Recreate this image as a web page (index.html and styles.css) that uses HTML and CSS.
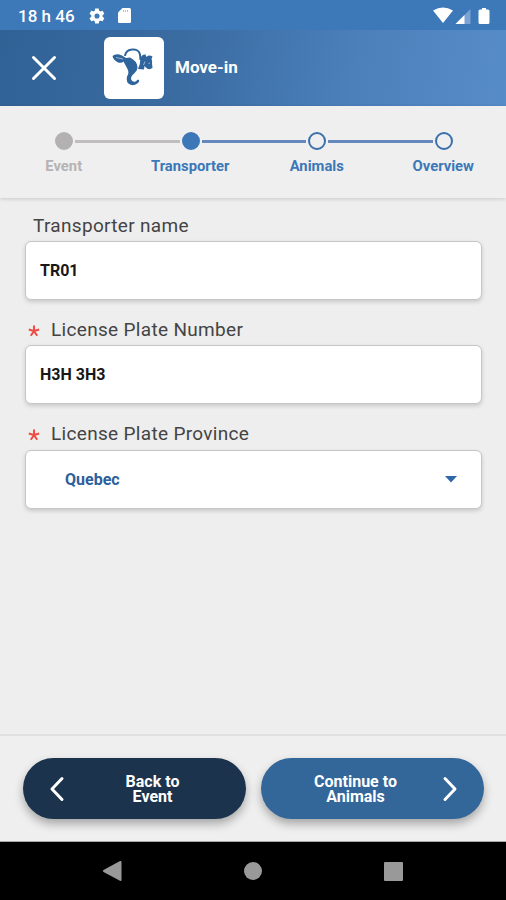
FILE: index.html
```html
<!DOCTYPE html>
<html lang="en">
<head>
<meta charset="utf-8">
<title>Move-in</title>
<link rel="stylesheet" href="styles.css">
</head>
<body>
<div class="status">
  <span class="clock">18 h 46</span>
  <svg class="gear" width="18" height="18" viewBox="0 0 24 24"><path fill="#fff" fill-rule="evenodd" d="M19.4 13c.1-.3.1-.7.1-1s0-.7-.1-1l2.1-1.600c.2-.2.200-.4.1-.6l-2-3.500c-.1-.2-.4-.3-.6-.2l-2.500 1c-.5-.4-1.100-.7-1.700-1l-.4-2.600c0-.3-.2-.5-.5-.5h-4c-.3 0-.5.2-.5.500l-.4 2.600c-.6.3-1.200.6-1.700 1l-2.500-1c-.2-.1-.5 0-.6.2l-2 3.500c-.1.200-.1.400.1.600L4.500 11c0 .3-.1.700-.1 1s0 .7.1 1l-2.200 1.600c-.2.2-.2.400-.1.600l2 3.500c.1.200.4.300.6.200l2.500-1c.5.4 1.100.7 1.700 1l.4 2.600c0 .3.2.500.5.500h4c.3 0 .5-.2.500-.5l.4-2.600c.6-.3 1.200-.6 1.700-1l2.500 1c.2.100.5 0 .6-.2l2-3.500c.1-.2.100-.4-.1-.6zM12 15.400a3.400 3.400 0 1 1 0-6.800 3.400 3.400 0 0 1 0 6.800z"/></svg>
  <svg class="card" width="13" height="15" viewBox="0 0 13 15"><path fill="#fff" d="M4.500 0H11.500Q13 0 13 1.500V13.500Q13 15 11.500 15H1.500Q0 15 0 13.500V4.500Z"/><path stroke="#a9c3e2" stroke-width="1" d="M5.500 2v2M7.500 2v2M9.500 2v2"/></svg>
  <svg class="signals" width="58" height="18" viewBox="0 0 58 18"><path fill="#fff" d="M0 3.500Q10 -2.500 20 3.500L10 16Z"/><path fill="#7ba3d4" d="M37.500 2V17H22.500Z"/><path fill="#fff" d="M31.500 8V17H22.500Z"/><path fill="#fff" d="M49 1h4v1.500h2q1.500 0 1.500 1.500V15.500q0 1.500-1.500 1.500h-8q-1.500 0-1.500-1.500V4q0-1.500 1.500-1.500h2Z"/></svg>
</div>
<header class="appbar">
  <svg class="close" width="26" height="26" viewBox="0 0 26 26"><path stroke="#fff" stroke-width="3" stroke-linecap="round" d="M2.500 2.500L23.500 23.500M23.500 2.500L2.500 23.500"/></svg>
  <div class="logo">
    <svg width="60" height="62" viewBox="0 0 60 62"><path class="ring" d="M21 19C22 10.500 35 10.500 36 17.500L36.500 23"/><path d="M8.500 19Q12 16 18 18.500L22 21L26 20.500Q33 24 33.500 30C33.500 36 27 37 27 42Q28 45.500 31.500 44.500L34 42.500Q36.500 43.500 34 46Q31 49 26.500 47.800Q21.500 45.500 23 39.500Q25.500 36 23.500 32L19.500 24.500Q18 26.500 14 25.500Q9 22.500 8.500 19Z"/><path d="M36.500 21Q38 17 41.500 17.500L42.500 20Q45 17.500 48.500 19.500L47.500 22Q48.500 24 48 26L48.500 31Q45.500 33 43 31.500L40.500 29L40 32.500L34 32Q36.500 27 36.500 21Z"/><path class="cut" d="M12 20.500L19 22M41 24.500L39.500 28M44.500 26.500L46 26"/></svg>
  </div>
  <h1 class="title">Move-in</h1>
</header>
<nav class="stepper">
  <div class="step done"><div class="track"><i class="line none"></i><i class="dot full"></i><i class="line"></i></div><span>Event</span></div>
  <div class="step"><div class="track"><i class="line gray"></i><i class="dot full"></i><i class="line"></i></div><span>Transporter</span></div>
  <div class="step"><div class="track"><i class="line"></i><i class="dot"></i><i class="line"></i></div><span>Animals</span></div>
  <div class="step"><div class="track"><i class="line"></i><i class="dot"></i><i class="line none"></i></div><span>Overview</span></div>
</nav>
<main class="form">
  <div class="label first">Transporter name</div>
  <div class="field">TR01</div>
  <div class="label"><svg class="star" width="12" height="12" viewBox="0 0 12 12"><path d="M6 6V.5M6 6L.8 4.500M6 6L11.200 4.500M6 6L2.800 10.800M6 6L9.200 10.800"/></svg>License Plate Number</div>
  <div class="field">H3H 3H3</div>
  <div class="label"><svg class="star" width="12" height="12" viewBox="0 0 12 12"><path d="M6 6V.5M6 6L.8 4.500M6 6L11.200 4.500M6 6L2.800 10.800M6 6L9.200 10.800"/></svg>License Plate Province</div>
  <div class="field select">Quebec<svg width="12" height="7" viewBox="0 0 12 7"><path fill="#2f68a8" d="M0 0H12L6 6.500Z"/></svg></div>
</main>
<footer class="actions">
  <button class="btn back"><svg width="16" height="26" viewBox="0 0 16 26"><path d="M13 2.500L3 13L13 23.500"/></svg><span>Back to<br>Event</span></button>
  <button class="btn next"><span>Continue to<br>Animals</span><svg width="16" height="26" viewBox="0 0 16 26"><path d="M3 2.500L13 13L3 23.500"/></svg></button>
</footer>
<div class="sysnav">
  <svg width="20" height="22" viewBox="0 0 20 22"><path fill="#999" d="M18 1Q19.500 .5 19.500 2V20Q19.500 21.500 18 20.800L1.500 12Q0 11 1.500 10Z"/></svg>
  <i class="home"></i>
  <i class="recent"></i>
</div>
</body>
</html>
```
FILE: styles.css
```css
* { box-sizing: border-box; }
body {
  margin: 0;
  height: 900px;
  display: flex;
  flex-direction: column;
  overflow: hidden;
  background: #eee;
  font-family: Roboto, "Liberation Sans", sans-serif;
}
svg { display: block; flex: none; fill: none; }
.status {
  height: 30px;
  display: flex;
  align-items: center;
  padding: 1px 15px 0 18px;
  background: #3d78b8;
  color: #fff;
}
.clock { font-size: 17px; font-weight: 500; width: 70px; white-space: nowrap; }
.card { margin-left: 12px; }
.signals { margin-left: auto; }
.appbar {
  height: 76px;
  display: flex;
  align-items: center;
  padding-left: 31px;
  background: linear-gradient(100deg, #316296 0%, #3a6ba1 35%, #4b80bb 70%, #568cc8 100%);
  color: #fff;
}
.logo {
  width: 60px;
  height: 62px;
  margin-left: 47px;
  border-radius: 6px;
  background: #fff;
}
.logo svg { fill: #2f659c; }
.logo .ring { fill: none; stroke: #2f659c; stroke-width: 2; }
.logo .cut { fill: none; stroke: #fff; stroke-width: 1; opacity: .5; }
.title { margin: 0 0 3px 11px; font-size: 17px; font-weight: 700; }
.stepper {
  height: 92px;
  display: flex;
  padding-top: 26px;
  background: #efefef;
  box-shadow: 0 1px 4px rgba(0, 0, 0, .16);
}
.step {
  flex: 1;
  text-align: center;
  font-size: 14.8px;
  font-weight: 700;
  line-height: 18px;
  color: #3c77b8;
}
.step.done { color: #b5b3b4; }
.step span { display: block; margin-top: 7px; padding-left: 1px; }
.track { display: flex; align-items: center; gap: 2px; height: 18px; padding-left: 1px; margin-right: -1px; }
.line { flex: 1; height: 3px; background: #6488bb; }
.gray, .done .line { background: #bfbdbe; }
.none, .done .none { background: none; }
.dot { width: 18px; height: 18px; border: 2.5px solid #3b70ad; border-radius: 50%; }
.full { background: #3c77b8; border-color: #3c77b8; }
.done .full { background: #b4b1b2; border-color: #b4b1b2; }
.form { flex: 1; padding: 15px 24px 0 25px; }
.label {
  display: flex;
  align-items: center;
  height: 28px;
  margin-top: 17px;
  padding: 0 0 4px 3px;
  font-size: 19px;
  letter-spacing: .32px;
  color: #444;
}
.label.first { margin-top: 0; padding-left: 8px; }
.star { margin: 3px 11px 0 0; stroke: #ef4b43; stroke-width: 2; }
.field {
  height: 59px;
  display: flex;
  align-items: center;
  padding: 0 24px 0 14px;
  border: 1px solid #c6c6c6;
  border-radius: 6px;
  background: #fff;
  box-shadow: 0 2px 4px rgba(0, 0, 0, .16);
  font-size: 16px;
  font-weight: 700;
  color: #181818;
}
.select {
  margin-top: 1px;
  justify-content: space-between;
  padding: 0 24px 0 39px;
  color: #2d609c;
}
.actions {
  height: 108px;
  display: flex;
  gap: 15px;
  padding: 22px 22px 0 23px;
  border-top: 2px solid #e0e0e0;
  background: #efefef;
  border-bottom: 1px solid #aaa;
}
.btn {
  flex: 1;
  height: 61px;
  display: flex;
  align-items: center;
  padding: 0 26px;
  border: 0;
  border-radius: 31px;
  box-shadow: 0 5px 10px rgba(0, 0, 0, .3);
  color: #fff;
  font: 700 16px/15px Roboto, "Liberation Sans", sans-serif;
}
.btn span { flex: 1; }
.btn svg { stroke: #fff; stroke-width: 3; stroke-linecap: round; stroke-linejoin: round; }
.back { background: #1b334c; }
.back span { margin: 0 -6px 0 14px; }
.next { background: #336699; }
.next span { margin: 0 10px 0 -8px; }
.sysnav {
  height: 58px;
  display: flex;
  align-items: center;
  justify-content: space-between;
  padding: 0 103px 0 102px;
  background: #000;
}
.home { width: 18px; height: 18px; border-radius: 50%; background: #999; }
.recent { width: 19px; height: 19px; border-radius: 1px; background: #999; }
```
